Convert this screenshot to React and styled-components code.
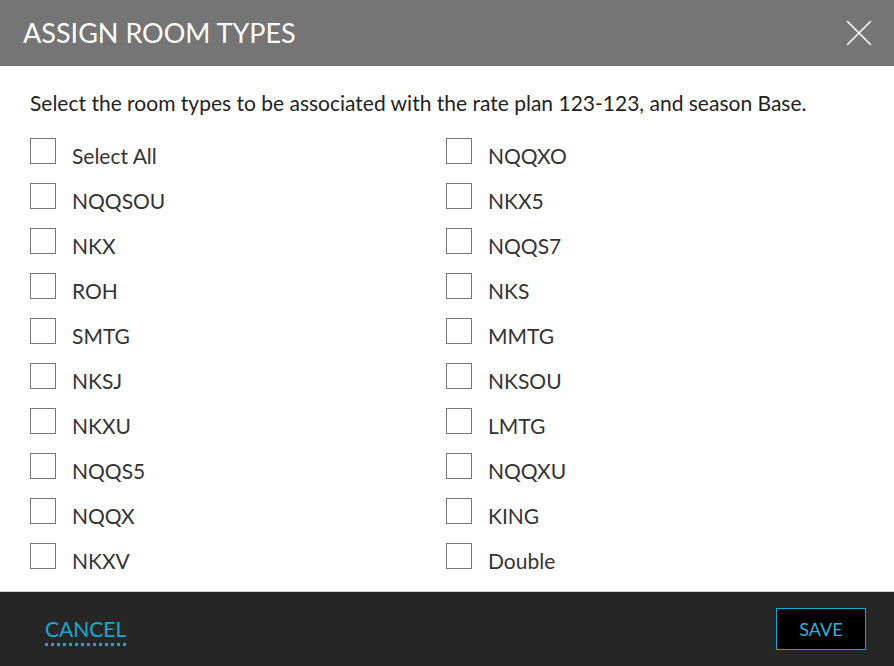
import styled, { createGlobalStyle } from "styled-components";

const GlobalStyle = createGlobalStyle`
	html, body {
		margin: 0;
		padding: 0;
		background: #ffffff;
	}
	body {
		font-family: Lato, "Open Sans", sans-serif;
	}
`;

const Modal = styled.div`
	width: 894px;
	height: 666px;
	display: flex;
	flex-direction: column;
	background: #ffffff;
`;

const Header = styled.header`
	height: 66px;
	background: #757575;
	display: flex;
	align-items: center;
	justify-content: space-between;
	padding: 0 22px 0 23px;
	box-sizing: border-box;
	flex-shrink: 0;
`;

const Title = styled.h1`
	margin: 0 0 2px;
	color: #ffffff;
	font-size: 27px;
	font-weight: 400;
	letter-spacing: 0;
`;

const CloseButton = styled.button`
	border: 0;
	background: none;
	padding: 0;
	width: 26px;
	height: 26px;
	cursor: pointer;
	display: flex;
`;

const Body = styled.main`
	flex: 1;
	padding: 22px 30px 0;
	box-sizing: border-box;
`;

const Intro = styled.p`
	margin: 0 0 20px;
	font-size: 21px;
	color: #222222;
	line-height: 30px;
`;

const Grid = styled.div`
	display: grid;
	grid-template-columns: 416px 1fr;
	grid-auto-flow: column;
	grid-template-rows: repeat(10, 45px);
`;

const Option = styled.label`
	display: flex;
	align-items: flex-start;
	gap: 16px;
	font-size: 21px;
	color: #333333;
	cursor: pointer;
`;

const Box = styled.span`
	width: 24px;
	height: 24px;
	border: 1px solid #777777;
	background: #ffffff;
	flex-shrink: 0;
`;

const OptionText = styled.span`
	line-height: 30px;
	margin-top: 3px;
`;

const Footer = styled.footer`
	height: 75px;
	background: #262626;
	border-top: 1px solid #cfcfcf;
	display: flex;
	align-items: center;
	justify-content: space-between;
	padding: 0 28px 0 45px;
	box-sizing: border-box;
	flex-shrink: 0;
`;

const CancelLink = styled.button`
	border: 0;
	background: none;
	padding: 0 0 2px;
	font-family: Lato, sans-serif;
	font-size: 21px;
	color: #1ba6d0;
	border-bottom: 3px dotted #1ba6d0;
	cursor: pointer;
	margin-top: 4px;
`;

const SaveButton = styled.button`
	width: 90px;
	height: 42px;
	background: #000000;
	border: 1px solid #1ba6d0;
	color: #2ab3dc;
	font-family: Lato, sans-serif;
	font-size: 18px;
	cursor: pointer;
	margin-top: -1px;
`;

const left = ["Select All", "NQQSOU", "NKX", "ROH", "SMTG", "NKSJ", "NKXU", "NQQS5", "NQQX", "NKXV"];
const right = ["NQQXO", "NKX5", "NQQS7", "NKS", "MMTG", "NKSOU", "LMTG", "NQQXU", "KING", "Double"];

const App = () => {
	return (
		<Modal>
			<GlobalStyle />
			<Header>
				<Title>ASSIGN ROOM TYPES</Title>
				<CloseButton aria-label="close">
					<svg width="26" height="26" viewBox="0 0 26 26">
						<path d="M1 1L25 25M25 1L1 25" stroke="#ffffff" strokeWidth="1.6" fill="none" />
					</svg>
				</CloseButton>
			</Header>
			<Body>
				<Intro>
					Select the room types to be associated with the rate plan 123-123, and season Base.
				</Intro>
				<Grid>
					{[...left, ...right].map((name) => (
						<Option key={name}>
							<Box />
							<OptionText>{name}</OptionText>
						</Option>
					))}
				</Grid>
			</Body>
			<Footer>
				<CancelLink>CANCEL</CancelLink>
				<SaveButton>SAVE</SaveButton>
			</Footer>
		</Modal>
	);
};

export default App;
